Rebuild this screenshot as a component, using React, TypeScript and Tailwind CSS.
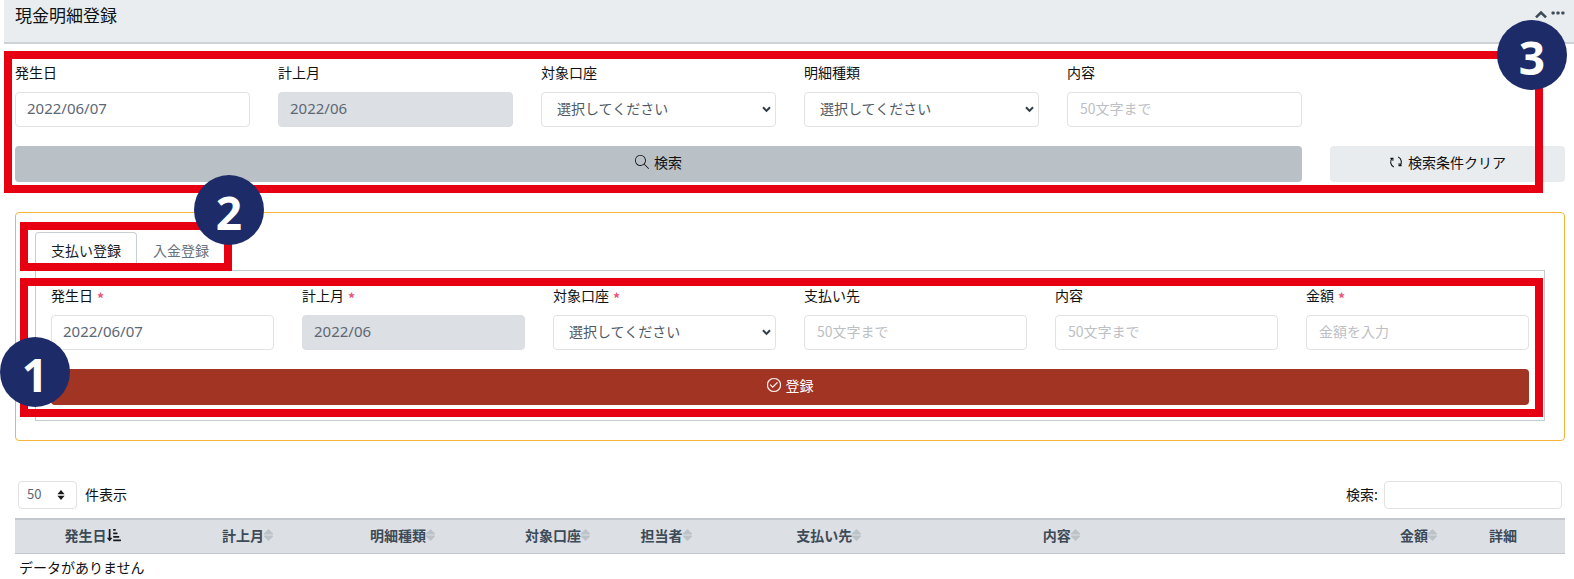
import React, { useState } from "react";
import { SlMagnifier, SlCheck } from "react-icons/sl";
import { FaSortAmountDownAlt } from "react-icons/fa";
import clsx from "clsx";

const inputClass =
  "h-[35px] w-full rounded-[4px] border border-[#e0e2e4] bg-white px-3 pb-[3px] text-[14px] text-[#5c6873] placeholder:text-[#bcbfc3] focus:outline-none";

const dateClass =
  "h-[35px] w-full rounded-[4px] border border-[#e0e2e4] bg-white px-[11px] pb-[3px] font-['Noto_Sans','Noto_Sans_CJK_JP',sans-serif] text-[15px] text-[#5c6873] focus:outline-none";

const monthClass =
  "h-[35px] w-full rounded-[4px] border border-[#dadde2] bg-[#dcdfe4] px-[11px] pb-[3px] font-['Noto_Sans','Noto_Sans_CJK_JP',sans-serif] text-[15px] text-[#5c6873] focus:outline-none";

const buttonClass =
  "flex h-9 items-center justify-center gap-[5px] rounded-[4px] pb-1";

type FieldProps = {
  id: string;
  label: string;
  required?: boolean;
  children: React.ReactNode;
};

const Field = ({ id, label, required, children }: FieldProps) => (
  <div className="flex min-w-0 flex-col gap-[10px]">
    <label htmlFor={id} className="flex h-5 leading-5">
      {label}
      {required && (
        <span className="ml-1 pt-[3px] font-bold text-[#e8557a]">*</span>
      )}
    </label>
    {children}
  </div>
);

const Select = ({ id }: { id: string }) => (
  <div className="relative">
    <select
      id={id}
      className="h-[35px] w-full appearance-none rounded-[4px] border border-[#e0e2e4] bg-white px-[15px] pb-[3px] text-[14px] text-[#4f5a64] focus:outline-none"
    >
      <option>選択してください</option>
    </select>
    <svg
      className="pointer-events-none absolute top-[14px] right-[5px] h-[7px] w-[9px] text-[#2f3b45]"
      viewBox="0 0 9 7"
      fill="none"
    >
      <path d="m1 1.3 3.5 3.6L8 1.3" stroke="currentColor" strokeWidth="2" />
    </svg>
  </div>
);

const LoopIcon = () => (
  <svg
    className="h-[14px] w-[14px]"
    viewBox="0 0 14 14"
    fill="none"
    stroke="currentColor"
    strokeWidth="1.1"
  >
    <path d="M4.8 11.9A5.4 5.4 0 0 1 3 3.4" />
    <path d="M1.4 3.4h2.5v2.4" />
    <path d="M9.2 2.1a5.4 5.4 0 0 1 1.8 8.5" />
    <path d="M12.6 10.6h-2.5V8.2" />
  </svg>
);

const SortIcon = () => (
  <svg
    className="h-3 w-[9px] text-[#bcc3c8]"
    viewBox="0 0 9 12"
    fill="currentColor"
  >
    <path d="M4.5 0 9 4.6v.8H0v-.8zM4.5 12 0 7.4v-.8h9v.8z" />
  </svg>
);

const Badge = ({ no, className }: { no: number; className: string }) => (
  <div
    className={clsx(
      "absolute z-20 flex h-[70px] w-[70px] items-center justify-center rounded-full bg-[#1d2b69] pt-1 font-['Noto_Sans','Open_Sans',sans-serif] text-[46px] leading-none font-bold text-white",
      className,
    )}
  >
    {no}
  </div>
);

const Frame = ({ className }: { className: string }) => (
  <div
    className={clsx(
      "pointer-events-none absolute z-10 border-8 border-[#e60012]",
      className,
    )}
  />
);

const columns = [
  { name: "発生日", width: "w-[10%]", sort: "asc" },
  { name: "計上月", width: "w-[10%]", sort: "both" },
  { name: "明細種類", width: "w-[10%]", sort: "both" },
  { name: "対象口座", width: "w-[10%]", sort: "both" },
  { name: "担当者", width: "w-[4%]", sort: "both" },
  { name: "支払い先", width: "w-[17%]", sort: "both" },
  { name: "内容", width: "w-[13%]", sort: "both" },
  { name: "金額", width: "w-[18%]", sort: "both", right: true },
  { name: "詳細", width: "w-[8%]", sort: "none" },
];

const Header = () => (
  <header className="flex h-11 items-start justify-between border-b-2 border-[#cdd2d7] bg-[#e9edf0] pr-[9px] pl-[11px]">
    <h1 className="pt-[3px] text-[17px] leading-6">現金明細登録</h1>
    <div className="flex items-start gap-1 pt-2 text-[#3c4b57]">
      <button type="button" aria-label="閉じる">
        <svg className="h-3 w-3" viewBox="0 0 12 12" fill="none">
          <path d="M1 9.4 6 4.6l5 4.8" stroke="currentColor" strokeWidth="2.6" />
        </svg>
      </button>
      <button type="button" aria-label="メニュー">
        <svg className="h-3 w-[14px]" viewBox="0 0 14 12" fill="currentColor">
          <rect x="0.5" y="3.5" width="3.2" height="3" rx="1" />
          <rect x="5.4" y="3.5" width="3.2" height="3" rx="1" />
          <rect x="10.3" y="3.5" width="3.2" height="3" rx="1" />
        </svg>
      </button>
    </div>
  </header>
);

const SearchForm = () => (
  <section className="relative pt-[18px] pr-[9px] pl-[11px]">
    <div className="grid grid-cols-6 gap-x-7 gap-y-[19px]">
      <Field id="s-date" label="発生日">
        <input id="s-date" className={dateClass} defaultValue="2022/06/07" />
      </Field>
      <Field id="s-month" label="計上月">
        <input id="s-month" className={monthClass} defaultValue="2022/06" readOnly />
      </Field>
      <Field id="s-account" label="対象口座">
        <Select id="s-account" />
      </Field>
      <Field id="s-kind" label="明細種類">
        <Select id="s-kind" />
      </Field>
      <Field id="s-content" label="内容">
        <input id="s-content" className={inputClass} placeholder="50文字まで" />
      </Field>
      <button
        type="button"
        className={clsx(buttonClass, "col-span-5 col-start-1 bg-[#b9c0c6]")}
      >
        <SlMagnifier className="h-[14px] w-[14px]" />
        検索
      </button>
      <button type="button" className={clsx(buttonClass, "bg-[#e9ecee]")}>
        <LoopIcon />
        検索条件クリア
      </button>
    </div>
    <Frame className="top-[7px] right-[31px] -bottom-[11px] left-0" />
    <Badge no={3} className="-top-6 right-[7px]" />
  </section>
);

const RegisterForm = () => {
  const [tab, setTab] = useState("pay");

  const tabClass = (name: string) =>
    clsx(
      "h-[38px] rounded-t-[4px] border border-b-0 px-[15px] pb-1",
      tab === name
        ? "border-[#c8ced3] bg-white text-[#181b1e]"
        : "border-transparent text-[#66727e]",
    );

  return (
    <section className="relative mt-[30px] mr-[9px] ml-[11px] rounded-[4px] border border-[#f6b53c] p-[19px]">
      <div className="flex" role="tablist">
        <button
          type="button"
          role="tab"
          aria-selected={tab === "pay"}
          className={tabClass("pay")}
          onClick={() => setTab("pay")}
        >
          支払い登録
        </button>
        <button
          type="button"
          role="tab"
          aria-selected={tab === "income"}
          className={tabClass("income")}
          onClick={() => setTab("income")}
        >
          入金登録
        </button>
      </div>
      <div className="border border-[#c3ccd1] px-[15px] pt-[14px] pb-[15px]">
        <div className="grid grid-cols-6 gap-x-7 gap-y-[19px]">
          <Field id="r-date" label="発生日" required>
            <input id="r-date" className={dateClass} defaultValue="2022/06/07" />
          </Field>
          <Field id="r-month" label="計上月" required>
            <input id="r-month" className={monthClass} defaultValue="2022/06" readOnly />
          </Field>
          <Field id="r-account" label="対象口座" required>
            <Select id="r-account" />
          </Field>
          <Field id="r-payee" label="支払い先">
            <input id="r-payee" className={inputClass} placeholder="50文字まで" />
          </Field>
          <Field id="r-content" label="内容">
            <input id="r-content" className={inputClass} placeholder="50文字まで" />
          </Field>
          <Field id="r-amount" label="金額" required>
            <input id="r-amount" className={inputClass} placeholder="金額を入力" />
          </Field>
          <button
            type="button"
            className={clsx(buttonClass, "col-span-6 bg-[#a23423] text-white")}
          >
            <SlCheck className="h-[14px] w-[14px] stroke-white stroke-[30]" />
            登録
          </button>
        </div>
      </div>
      <Frame className="top-[9px] left-1 h-[49px] w-[212px]" />
      <Frame className="top-[65px] right-[21px] bottom-[23px] left-1" />
      <Badge no={2} className="-top-[38px] left-[178px]" />
      <Badge no={1} className="top-[124px] -left-4" />
    </section>
  );
};

const DetailTable = () => (
  <section className="mt-10 mr-[9px] ml-[11px]">
    <div className="flex items-center justify-between px-[3px]">
      <div className="flex items-center gap-2">
        <div className="relative">
          <select
            id="page-length"
            className="h-7 w-[59px] appearance-none rounded-[4px] border border-[#e0e2e4] bg-white px-2 pb-[2px] text-[13px] text-[#5c6873]"
            defaultValue="50"
          >
            <option>50</option>
          </select>
          <svg
            className="pointer-events-none absolute top-[9px] right-3 h-[10px] w-2 text-[#181b1e]"
            viewBox="0 0 8 10"
            fill="currentColor"
          >
            <path d="M4 0 7.6 4.3H.4zM4 10 .4 5.7h7.2z" />
          </svg>
        </div>
        <label htmlFor="page-length" className="pb-[3px]">
          件表示
        </label>
      </div>
      <div className="flex items-center gap-[6px]">
        <label htmlFor="table-search" className="pb-[3px]">
          検索:
        </label>
        <input
          id="table-search"
          className="h-7 w-[178px] rounded-[4px] border border-[#e0e2e4] bg-white px-2"
        />
      </div>
    </div>
    <table className="mt-[9px] w-full table-fixed border-collapse">
      <thead>
        <tr className="h-[34px] border-t-2 border-b border-[#c3c6ca] bg-[#dcdfe4] text-[#3c4b57]">
          {columns.map((col) => (
            <th
              key={col.name}
              className={clsx(
                "p-0 pb-[3px] font-bold whitespace-nowrap",
                col.width,
                col.right ? "pr-1 text-right" : "text-center",
              )}
            >
              <span className="inline-flex items-center">
                {col.name}
                {col.sort === "asc" && (
                  <FaSortAmountDownAlt className="h-[14px] w-[14px] text-[#181b1e]" />
                )}
                {col.sort === "both" && <SortIcon />}
              </span>
            </th>
          ))}
        </tr>
      </thead>
      <tbody>
        <tr>
          <td colSpan={9} className="px-1 pt-[1px] leading-6">
            データがありません
          </td>
        </tr>
      </tbody>
    </table>
  </section>
);

export default function App() {
  return (
    <main className="ml-1 bg-white font-['Noto_Sans_CJK_JP',sans-serif] text-[14px] leading-5 text-[#0f1113]">
      <Header />
      <SearchForm />
      <RegisterForm />
      <DetailTable />
    </main>
  );
}
